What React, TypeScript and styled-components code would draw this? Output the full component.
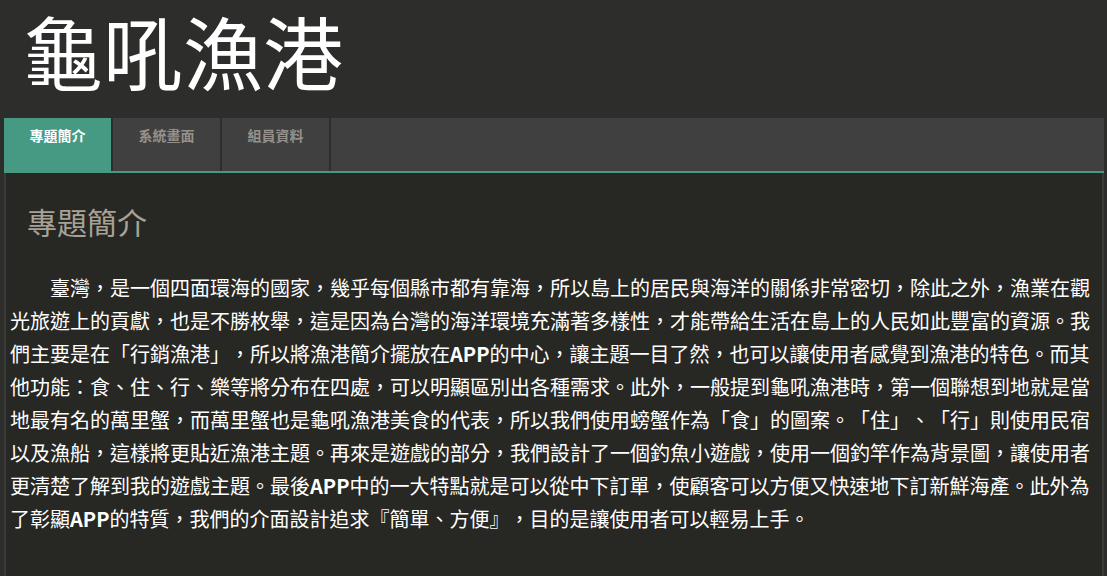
import styled, { createGlobalStyle } from 'styled-components';

const GlobalStyle = createGlobalStyle`
  html, body {
    margin: 0;
    padding: 0;
    background: #2d2d2b;
    color: #ffffff;
    font-family: "Noto Sans CJK TC", "Noto Sans", sans-serif;
    text-spacing-trim: space-all;
  }
`;

const Page = styled.div`
  padding: 0 3px 0 4px;
  min-height: 576px;
  box-sizing: border-box;
`;

const Title = styled.h1`
  margin: 0;
  padding: 1px 0 21px 19px;
  font-size: 80px;
  line-height: 96px;
  font-weight: 400;
  color: #ffffff;
`;

const TabBar = styled.nav`
  display: flex;
  height: 53px;
  background: #404040;
  border-bottom: 2px solid #469a84;
`;

const Tab = styled.div<{ $active?: boolean }>`
  width: 107px;
  border-right: 2px solid #2d2d2b;
  background: ${(p) => (p.$active ? '#469a84' : '#404040')};
  color: ${(p) => (p.$active ? '#ffffff' : '#95918a')};
  font-size: 14px;
  font-weight: 700;
  text-align: center;
  padding-top: 7px;
  line-height: 20px;
`;

const Panel = styled.section`
  background: #272724;
  border-left: 2px solid #3a3a38;
  border-right: 2px solid #3a3a38;
  padding: 28px 5px 40px 2px;
  min-height: 360px;
`;

const Heading = styled.h2`
  margin: 0 0 30px 19px;
  font-size: 30px;
  line-height: 40px;
  font-weight: 400;
  color: #a8a296;
`;

const Paragraph = styled.p`
  margin: 0 0 0 2px;
  font-size: 20px;
  line-height: 33px;
  text-indent: 2em;
  color: #ffffff;
  text-spacing-trim: space-all;

  b {
    font-weight: 700;
  }
`;

const tabs = ['專題簡介', '系統畫面', '組員資料'];

export default function App() {
  return (
    <Page>
      <GlobalStyle />
      <Title>龜吼漁港</Title>
      <TabBar>
        {tabs.map((t, i) => (
          <Tab key={t} $active={i === 0}>
            {t}
          </Tab>
        ))}
      </TabBar>
      <Panel>
        <Heading>專題簡介</Heading>
        <Paragraph>
          臺灣，是一個四面環海的國家，幾乎每個縣市都有靠海，所以島上的居民與海洋的關係非常密切，除此之外，漁業在觀光旅遊上的貢獻，也是不勝枚舉，這是因為台灣的海洋環境充滿著多樣性，才能帶給生活在島上的人民如此豐富的資源。我們主要是在「行銷漁港」，所以將漁港簡介擺放在<b>APP</b>的中心，讓主題一目了然，也可以讓使用者感覺到漁港的特色。而其他功能：食、住、行、樂等將分布在四處，可以明顯區別出各種需求。此外，一般提到龜吼漁港時，第一個聯想到地就是當地最有名的萬里蟹，而萬里蟹也是龜吼漁港美食的代表，所以我們使用螃蟹作為「食」的圖案。「住」、「行」則使用民宿以及漁船，這樣將更貼近漁港主題。再來是遊戲的部分，我們設計了一個釣魚小遊戲，使用一個釣竿作為背景圖，讓使用者更清楚了解到我的遊戲主題。最後<b>APP</b>中的一大特點就是可以從中下訂單，使顧客可以方便又快速地下訂新鮮海產。此外為了彰顯<b>APP</b>的特質，我們的介面設計追求『簡單、方便』，目的是讓使用者可以輕易上手。
        </Paragraph>
      </Panel>
    </Page>
  );
}
